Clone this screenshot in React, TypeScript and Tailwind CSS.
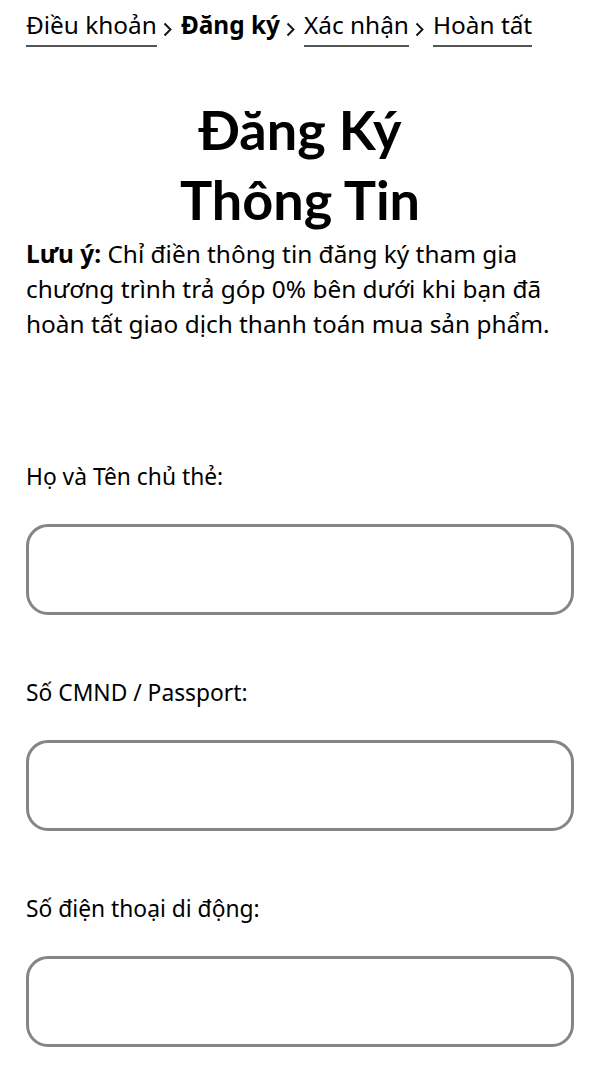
const body = "font-['Noto_Sans',sans-serif]";
const title = "font-['Lato','Inter',sans-serif]";

const steps = [
  { label: 'Điều khoản', underline: true },
  { label: 'Đăng ký', bold: true },
  { label: 'Xác nhận', underline: true },
  { label: 'Hoàn tất', underline: true },
];

const fields = ['Họ và Tên chủ thẻ:', 'Số CMND / Passport:', 'Số điện thoại di động:'];

function Chevron() {
  return (
    <svg width="9" height="15" viewBox="0 0 9 15" className="ml-[6px] mr-[9px] mt-[3px]" fill="none">
      <path d="M1.5 1.5 7.5 7.5 1.5 13.5" stroke="#111" strokeWidth="1.9" />
    </svg>
  );
}

export default function App() {
  return (
    <div className={`min-h-[1082px] w-[600px] bg-white px-[26px] text-black ${body}`}>
      {/* Breadcrumb */}
      <nav className="flex items-center pt-[9px] text-[24.4px] leading-[32px]">
        {steps.map((s, i) => (
          <div key={s.label} className="flex items-center">
            {i > 0 && <Chevron />}
            <span
              className={`${s.bold ? 'font-bold' : ''} ${
                s.underline ? 'border-b-2 border-[#555] pb-[4px]' : 'pb-[6px]'
              }`}
            >
              {s.label}
            </span>
          </div>
        ))}
      </nav>

      {/* Heading */}
      <h1 className={`mt-[48px] text-center text-[54px] font-bold leading-[70px] ${title}`}>
        Đăng Ký
        <br />
        Thông Tin
      </h1>

      <p className="mt-[1px] text-[24.4px] leading-[35px]">
        <span className="font-bold">Lưu ý:</span> Chỉ điền thông tin đăng ký tham gia
        <br />
        chương trình trả góp 0% bên dưới khi bạn đã
        <br />
        hoàn tất giao dịch thanh toán mua sản phẩm.
      </p>

      {/* Form */}
      <form className="mt-[120px] flex flex-col">
        {fields.map((f) => (
          <label key={f} className="mb-[62px] flex flex-col">
            <span className="text-[22.8px] leading-[32px]">{f}</span>
            <input
              type="text"
              className="mt-[31px] h-[91px] w-full rounded-[22px] border-[3px] border-[#858585] bg-white px-4 outline-none"
            />
          </label>
        ))}
      </form>
    </div>
  );
}
